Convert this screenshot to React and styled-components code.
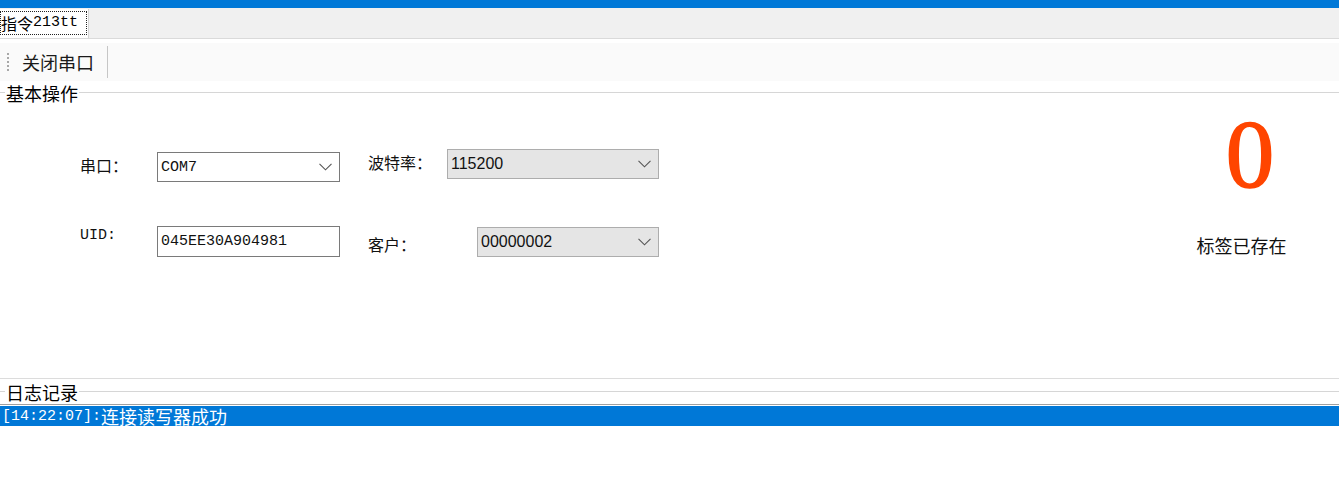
import React from "react";
import styled, { createGlobalStyle } from "styled-components";

const GlobalStyle = createGlobalStyle`
  html, body { margin: 0; padding: 0; background: #ffffff; }
  body { font-family: "Noto Sans CJK SC", "Noto Sans", sans-serif; color: #000; }
  * { box-sizing: border-box; }
`;

const CJK = `"Noto Sans CJK SC", "Noto Sans", sans-serif`;
const MONO = `"Liberation Mono", "Noto Sans CJK SC", monospace`;

const Window = styled.div`
  width: 1339px;
  height: 492px;
  display: flex;
  flex-direction: column;
  overflow: hidden;
  background: #fff;
`;

const TitleStrip = styled.div`
  height: 8px;
  background: #0078d7;
  flex: none;
`;

const TabStrip = styled.div`
  height: 31px;
  background: #f0f0f0;
  border-bottom: 1px solid #dadada;
  display: flex;
  align-items: flex-end;
  flex: none;
`;

const Tab = styled.div`
  height: 29px;
  width: 89px;
  background: #fff;
  border-right: 1px solid #d4d4d4;
  padding: 2px 1px 3px 0;
  display: flex;
`;

const TabFocus = styled.div`
  flex: 1;
  border: 1px dotted #222;
  display: flex;
  align-items: center;
  font-family: ${CJK};
  font-size: 16px;
  line-height: 20px;
  white-space: nowrap;
`;

const Latin = styled.span`
  font-family: ${MONO};
  font-size: ${(p) => p.$size || 15}px;
`;

const Spacer = styled.div`
  height: ${(p) => p.$h}px;
  flex: none;
`;

const Toolbar = styled.div`
  height: 38px;
  background: #fafafa;
  display: flex;
  align-items: center;
  flex: none;
`;

const Grip = styled.div`
  width: 14px;
  height: 100%;
  display: flex;
  flex-direction: column;
  align-items: center;
  justify-content: center;
  gap: 2px;
  padding-left: 1px;
`;

const GripDot = styled.span`
  width: 2px;
  height: 2px;
  background: #a8a8a8;
`;

const ToolButton = styled.div`
  width: 92px;
  height: 30px;
  display: flex;
  align-items: center;
  padding-left: 8px;
  font-family: ${CJK};
  font-size: 18px;
  color: #1a1a1a;
`;

const ToolSep = styled.div`
  width: 1px;
  height: 32px;
  background: #c6c6c6;
  margin-left: 1px;
`;

const GroupHeader = styled.div`
  height: ${(p) => p.$h}px;
  display: flex;
  align-items: center;
  flex: none;
`;

const HeaderLine = styled.div`
  height: 1px;
  background: #d6d6d6;
  width: ${(p) => (p.$w ? `${p.$w}px` : "auto")};
  flex: ${(p) => (p.$w ? "none" : "1")};
`;

const GroupTitle = styled.div`
  font-family: ${CJK};
  font-size: 18px;
  line-height: 20px;
  padding: 0 1px;
  white-space: nowrap;
`;

const GroupBody = styled.div`
  height: 276px;
  display: flex;
  flex: none;
  border-bottom: 1px solid #dcdcdc;
`;

const Form = styled.div`
  padding: 46px 0 0 80px;
  display: grid;
  grid-template-rows: 77px auto;
`;

const FormRow = styled.div`
  display: flex;
  align-items: flex-start;
`;

const Label = styled.div`
  width: ${(p) => p.$w}px;
  margin-top: ${(p) => p.$top || 0}px;
  margin-left: ${(p) => p.$left || 0}px;
  font-family: ${(p) => (p.$mono ? MONO : CJK)};
  font-size: ${(p) => (p.$mono ? 15 : 16)}px;
  line-height: 20px;
  color: #111;
  white-space: nowrap;
`;

const Field = styled.div`
  width: ${(p) => p.$w}px;
  height: ${(p) => p.$h || 30}px;
  margin-top: ${(p) => p.$top || 0}px;
  margin-left: ${(p) => p.$left || 0}px;
  border: 1px solid ${(p) => (p.$list ? "#adadad" : "#7a7a7a")};
  background: ${(p) => (p.$list ? "#e5e5e5" : "#ffffff")};
  display: flex;
  align-items: center;
  padding: 0 7px 0 3px;
  font-family: ${(p) => (p.$list ? `"Liberation Sans", "Noto Sans", sans-serif` : MONO)};
  font-size: ${(p) => (p.$list ? 16 : 15)}px;
  color: #111;
`;

const FieldText = styled.span`
  flex: 1;
  white-space: nowrap;
`;

const Chevron = () => (
  <svg width="13" height="8" viewBox="0 0 13 8">
    <polyline points="0.5,0.8 6.5,6.8 12.5,0.8" fill="none" stroke="#555" strokeWidth="1.1" />
  </svg>
);

const Status = styled.div`
  margin-left: auto;
  margin-right: 53px;
  width: 89px;
  display: flex;
  flex-direction: column;
  align-items: center;
`;

const Counter = styled.div`
  margin-top: 3px;
  margin-left: 17px;
  font-family: "Liberation Serif", serif;
  font-size: 97px;
  line-height: 98px;
  color: #ff4500;
  -webkit-text-stroke: 1.6px #ff4500;
`;

const StatusText = styled.div`
  margin-top: 29px;
  font-family: ${CJK};
  font-size: 18px;
  line-height: 24px;
  white-space: nowrap;
  color: #111;
`;

const LogList = styled.div`
  border-top: 1px solid #a0a0a0;
  padding-top: 1px;
  flex: 1;
`;

const LogRow = styled.div`
  height: 20px;
  background: ${(p) => (p.$selected ? "#0078d7" : "transparent")};
  color: ${(p) => (p.$selected ? "#fff" : "#000")};
  display: flex;
  align-items: center;
  padding-left: 2px;
  font-family: ${CJK};
  font-size: 18px;
  white-space: nowrap;
`;

export default function App() {
  return (
    <>
      <GlobalStyle />
      <Window>
        <TitleStrip />
        <TabStrip>
          <Tab>
            <TabFocus>
              指令<Latin>213tt</Latin>
            </TabFocus>
          </Tab>
        </TabStrip>
        <Spacer $h={4} />
        <Toolbar>
          <Grip>
            {[0, 1, 2, 3, 4].map((i) => (
              <GripDot key={i} />
            ))}
          </Grip>
          <ToolButton>关闭串口</ToolButton>
          <ToolSep />
        </Toolbar>
        <Spacer $h={1} />
        <GroupHeader $h={21}>
          <HeaderLine $w={5} />
          <GroupTitle>基本操作</GroupTitle>
          <HeaderLine />
        </GroupHeader>
        <GroupBody>
          <Form>
            <FormRow>
              <Label $w={77} $top={6}>串口：</Label>
              <Field $w={183} $top={3}>
                <FieldText>COM7</FieldText>
                <Chevron />
              </Field>
              <Label $w={79} $top={3} $left={28}>波特率：</Label>
              <Field $w={212} $list>
                <FieldText>115200</FieldText>
                <Chevron />
              </Field>
            </FormRow>
            <FormRow>
              <Label $w={77} $mono>UID:</Label>
              <Field $w={183} $h={31}>
                <FieldText>045EE30A904981</FieldText>
              </Field>
              <Label $w={109} $top={8} $left={28}>客户：</Label>
              <Field $w={182} $top={1} $list>
                <FieldText>00000002</FieldText>
                <Chevron />
              </Field>
            </FormRow>
          </Form>
          <Status>
            <Counter>0</Counter>
            <StatusText>标签已存在</StatusText>
          </Status>
        </GroupBody>
        <GroupHeader $h={25}>
          <HeaderLine $w={5} />
          <GroupTitle>日志记录</GroupTitle>
          <HeaderLine />
        </GroupHeader>
        <LogList>
          <LogRow $selected>
            <Latin>[14:22:07]:</Latin>连接读写器成功
          </LogRow>
        </LogList>
      </Window>
    </>
  );
}
